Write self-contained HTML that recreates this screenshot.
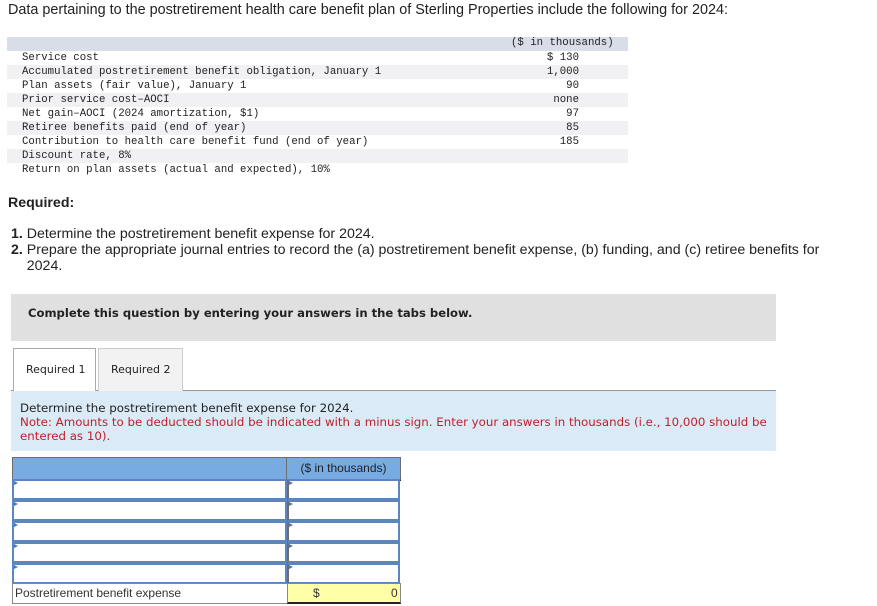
<!DOCTYPE html>
<html><head><meta charset="utf-8"><style>
body{margin:0;width:877px;height:606px;position:relative;background:#fff;font-family:"Liberation Sans",Arial,sans-serif;color:#222;overflow:hidden}
.a{position:absolute;white-space:nowrap}
.m{font-family:"Liberation Mono","DejaVu Sans Mono",monospace;font-size:10.7px;color:#222}
.r{position:absolute;left:7px;width:621px;height:14px}
.g{background:#f1f1f3}
.t{font-size:14.2px}
.row{position:absolute;left:12px;width:388px;height:21px}
.c1{position:absolute;left:0;top:0;width:271px;height:17px;border:2px solid #5b86bf;background:#fff}
.c2{position:absolute;left:275px;top:0;width:109px;height:17px;border:2px solid #5b86bf;background:#fff;border-left-color:#6d6d6d}
.c1:before,.c2:before{content:"";position:absolute;left:0;top:0;border-left:4px solid #3d7ac9;border-top:2px solid transparent;border-bottom:2px solid transparent}
</style></head><body>
<div class="a" style="left:8px;top:2px;font-size:14.4px">Data pertaining to the postretirement health care benefit plan of Sterling Properties include the following for 2024:</div>
<div class="r" style="top:37px;background:#d9dde7"></div>
<div class="r g" style="top:65px"></div>
<div class="r g" style="top:93px"></div>
<div class="r g" style="top:121px"></div>
<div class="r g" style="top:149px"></div>
<div class="a m" style="left:511px;top:37px">($ in thousands)</div>
<div class="a m" style="left:22px;top:51px;line-height:14px">Service cost<br>Accumulated postretirement benefit obligation, January 1<br>Plan assets (fair value), January 1<br>Prior service cost–AOCI<br>Net gain–AOCI (2024 amortization, $1)<br>Retiree benefits paid (end of year)<br>Contribution to health care benefit fund (end of year)<br>Discount rate, 8%<br>Return on plan assets (actual and expected), 10%</div>
<div class="a m" style="left:480px;width:99px;top:51px;line-height:14px;text-align:right">$ 130<br>1,000<br>90<br>none<br>97<br>85<br>185</div>
<div class="a t" style="left:8px;top:195px;font-weight:bold">Required:</div>
<div class="a t" style="left:11px;top:226px"><b>1.</b> Determine the postretirement benefit expense for 2024.</div>
<div class="a t" style="left:11px;top:242px;line-height:16px"><b>2.</b> Prepare the appropriate journal entries to record the (a) postretirement benefit expense, (b) funding, and (c) retiree benefits for<br>&nbsp;&nbsp;&nbsp;&nbsp;2024.</div>
<div class="a" style="left:11px;top:294px;width:765px;height:47px;background:#e0e0e0"></div>
<div class="a" style="left:28px;top:306px;font-family:'DejaVu Sans',sans-serif;font-size:11.6px;font-weight:bold;color:#222">Complete this question by entering your answers in the tabs below.</div>
<div class="a" style="left:11px;top:390px;width:765px;height:1px;background:#999"></div>
<div class="a" style="left:13px;top:348px;width:81px;height:43px;border:1px solid #aaa;border-bottom:none;background:#fff"></div>
<div class="a" style="left:98px;top:348px;width:83px;height:42px;border:1px solid #ccc;border-bottom:none;background:#f2f2f2"></div>
<div class="a" style="left:26px;top:363px;font-family:'DejaVu Sans',sans-serif;font-size:11px">Required 1</div>
<div class="a" style="left:111px;top:363px;font-family:'DejaVu Sans',sans-serif;font-size:11px">Required 2</div>
<div class="a" style="left:11px;top:391px;width:765px;height:60px;background:#dbeaf7"></div>
<div class="a" style="left:20px;top:401px;font-family:'DejaVu Sans',sans-serif;font-size:11.8px;line-height:14px;color:#222">Determine the postretirement benefit expense for 2024.<br><span style="color:#c0202a">Note: Amounts to be deducted should be indicated with a minus sign. Enter your answers in thousands (i.e., 10,000 should be<br>entered as 10).</span></div>
<div class="a" style="left:12px;top:457px;width:274px;height:21px;background:#77abe2;border:1px solid #6d6d6d;border-right:none"></div>
<div class="a" style="left:286px;top:457px;width:113px;height:21px;background:#77abe2;border:1px solid #6d6d6d;border-bottom:2px solid #222"></div>
<div class="a" style="left:286px;top:461px;width:115px;text-align:center;font-size:12px">($ in thousands)</div>
<div class="row" style="top:479px"><div class="c1"></div><div class="c2"></div></div>
<div class="row" style="top:500px"><div class="c1"></div><div class="c2"></div></div>
<div class="row" style="top:521px"><div class="c1"></div><div class="c2"></div></div>
<div class="row" style="top:542px"><div class="c1"></div><div class="c2"></div></div>
<div class="row" style="top:563px"><div class="c1"></div><div class="c2"></div></div>
<div class="a" style="left:12px;top:583px;width:274px;height:19px;border:1px solid #888;background:#fff"></div>
<div class="a" style="left:15px;top:586px;font-size:12px;color:#333">Postretirement benefit expense</div>
<div class="a" style="left:287px;top:583px;width:112px;height:18px;background:#ffffa8;border:1px solid #888;border-bottom:2px solid #222"></div>
<div class="a" style="left:313px;top:586px;font-size:12px;color:#333">$</div>
<div class="a" style="left:391px;top:586px;font-size:12px;color:#333">0</div>
</body></html>
